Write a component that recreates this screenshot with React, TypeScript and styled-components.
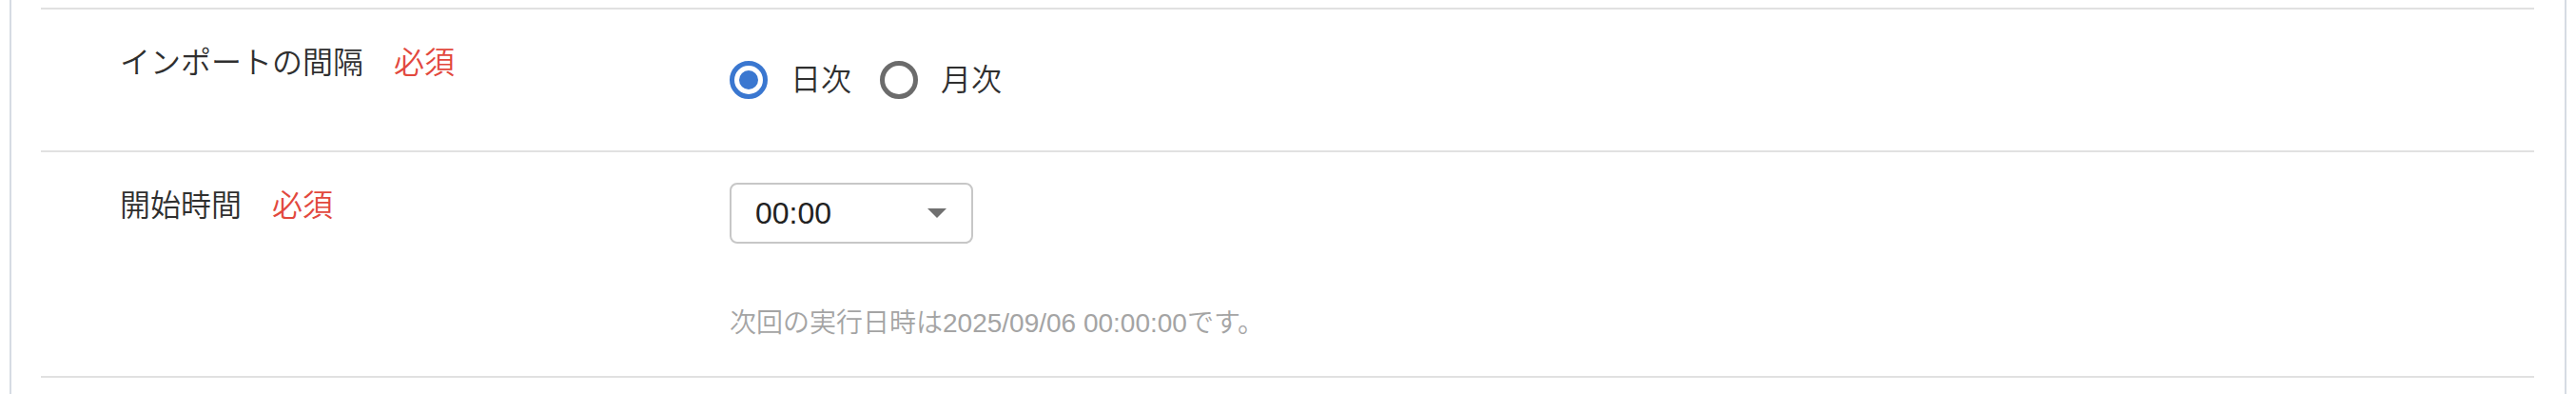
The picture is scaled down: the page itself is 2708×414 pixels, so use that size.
import React, { useState } from "react";
import styled, { createGlobalStyle } from "styled-components";

const GlobalStyle = createGlobalStyle`
  html, body {
    margin: 0;
    padding: 0;
    background: #ffffff;
  }
  body {
    font-family: "Liberation Sans", "Noto Sans CJK JP", sans-serif;
    color: #333333;
  }
  * { box-sizing: border-box; }
`;

const Page = styled.div`
  padding: 0 10px;
  height: 414px;
  overflow: hidden;
`;

const Card = styled.section`
  height: 414px;
  border-left: 2px solid #d6dbe3;
  border-right: 2px solid #d6dbe3;
  padding: 8px 32px 0 31px;
  background: #ffffff;
`;

const Row = styled.div`
  display: grid;
  grid-template-columns: 724px 1fr;
  border-top: 2px solid #e1e1e1;
  padding: 32px 0;
  &:last-child {
    border-bottom: 2px solid #e1e1e1;
  }
`;

const LabelCell = styled.div`
  padding-left: 83px;
  display: flex;
  align-items: flex-start;
  font-size: 32px;
  font-weight: 350;
  line-height: 48px;
  color: #2f2f2f;
  white-space: nowrap;
`;

const Required = styled.span`
  margin-left: 32px;
  color: #e2483d;
`;

const FieldCell = styled.div`
  display: flex;
  flex-direction: column;
  align-items: flex-start;
`;

const RadioGroup = styled.div`
  display: flex;
  align-items: center;
  gap: 30px;
  min-height: 84px;
`;

const RadioItem = styled.label`
  display: flex;
  align-items: center;
  gap: 24px;
  font-size: 32px;
  font-weight: 350;
  line-height: 48px;
  color: #2f2f2f;
  cursor: pointer;
`;

const RadioCircle = styled.span<{ $checked: boolean }>`
  width: 40px;
  height: 40px;
  border-radius: 50%;
  border: 5px solid ${(p) => (p.$checked ? "#3a77d0" : "#6b6b6b")};
  display: flex;
  align-items: center;
  justify-content: center;
  flex-shrink: 0;
  &::after {
    content: "";
    width: 20px;
    height: 20px;
    border-radius: 50%;
    background: ${(p) => (p.$checked ? "#3a77d0" : "transparent")};
  }
`;

const HiddenInput = styled.input`
  display: none;
`;

const SelectBox = styled.div`
  width: 256px;
  height: 64px;
  border: 2px solid #c7c7c7;
  border-radius: 8px;
  display: flex;
  align-items: center;
  justify-content: space-between;
  padding: 0 26px 0 25px;
  font-size: 32px;
  color: #222222;
  background: #ffffff;
`;

const Caret = styled.span`
  width: 0;
  height: 0;
  border-left: 10px solid transparent;
  border-right: 10px solid transparent;
  border-top: 10px solid #707070;
`;

const Hint = styled.p`
  margin: 61px 0 0;
  font-size: 28px;
  font-weight: 350;
  line-height: 46px;
  color: #a4a4a4;
`;

export default function App() {
  const [interval, setInterval] = useState<"daily" | "monthly">("daily");
  return (
    <>
      <GlobalStyle />
      <Page>
        <Card>
          <Row>
            <LabelCell>
              インポートの間隔<Required>必須</Required>
            </LabelCell>
            <FieldCell>
              <RadioGroup>
                <RadioItem>
                  <HiddenInput
                    type="radio"
                    name="interval"
                    checked={interval === "daily"}
                    onChange={() => setInterval("daily")}
                  />
                  <RadioCircle $checked={interval === "daily"} />
                  日次
                </RadioItem>
                <RadioItem>
                  <HiddenInput
                    type="radio"
                    name="interval"
                    checked={interval === "monthly"}
                    onChange={() => setInterval("monthly")}
                  />
                  <RadioCircle $checked={interval === "monthly"} />
                  月次
                </RadioItem>
              </RadioGroup>
            </FieldCell>
          </Row>
          <Row>
            <LabelCell>
              開始時間<Required>必須</Required>
            </LabelCell>
            <FieldCell>
              <SelectBox>
                <span>00:00</span>
                <Caret />
              </SelectBox>
              <Hint>次回の実行日時は2025/09/06 00:00:00です。</Hint>
            </FieldCell>
          </Row>
        </Card>
      </Page>
    </>
  );
}
